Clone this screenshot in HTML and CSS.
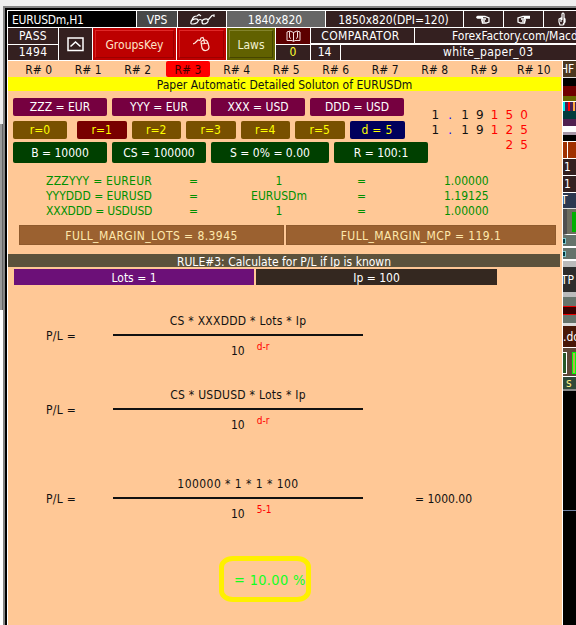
FILE: index.html
```html
<!DOCTYPE html>
<html lang="en">
<head>
    <meta charset="UTF-8">
    <meta name="viewport" content="width=device-width, initial-scale=1.0">
    <title>EURUSDm,H1</title>
    <link rel="stylesheet" href="styles.css">
</head>
<body>
    <div class="top-edge"></div>
    <div class="main">
        <div class="gutter"><i class="g1"></i><i class="g2"></i><i class="g3"></i></div>
        <div class="window">
            <div class="chart">
                <!-- toolbar, first row -->
                <div class="bar">
                    <div class="cell symbol">EURUSDm,H1</div>
                    <div class="cell vps">VPS</div>
                    <div class="cell glasses">
                        <svg width="25" height="12" viewBox="0 0 25 12"><path d="M1 9C1 6 7 5 8 7S6 11 3 11S1 10 1 9ZM12 9C12 6 17 5 18 7S16 11 14 11S12 10 12 9ZM8 8Q10 5 12.500 8M2 7Q3 3 7 3L9 1.500L11 3M18 7L22 2.500L24 2V4" fill="none" stroke="#fff" stroke-width="1.200"/></svg>
                    </div>
                    <div class="cell size">1840x820</div>
                    <div class="cell dpi">1850x820(DPI=120)</div>
                    <div class="cell hand">
                        <svg width="15" height="9" viewBox="0 0 15 9"><path d="M7 3H1.500Q0 2 1.500 1.500H9L13 3V7L10 8H6.500L6 6H9M6 6Q5 4 7 4H10" fill="none" stroke="#fff" stroke-width="1.300"/></svg>
                    </div>
                    <div class="cell hand">
                        <svg class="flip" width="15" height="9" viewBox="0 0 15 9"><path d="M1 1.500H8L13 3V7L10 8H6.500L6 6H9M1 3H7M6 6Q5 4 7 4H10" fill="none" stroke="#fff" stroke-width="1.300"/></svg>
                    </div>
                    <div class="cell up">
                        <svg width="9" height="14" viewBox="0 0 9 14"><path d="M4 8V2Q5 0 6 2V12L5 13H2L1 10V7L3 6V10M6 6L7 7V10L5 12" fill="none" stroke="#fff" stroke-width="1.200"/></svg>
                    </div>
                </div>
                <!-- toolbar, second row -->
                <div class="bar tall">
                    <div class="stack pass">
                        <div class="cell">PASS</div>
                        <div class="cell">1494</div>
                    </div>
                    <div class="cell toggle">
                        <svg width="17" height="15" viewBox="0 0 17 15"><rect x="1" y="1" width="15" height="12.500" fill="none" stroke="#fff" stroke-width="1.500"/><path d="M3.500 9.500L8.500 5L13.500 9.500" fill="none" stroke="#fff" stroke-width="1.600"/></svg>
                    </div>
                    <div class="cell groups"><span>GroupsKey</span></div>
                    <div class="cell mouse">
                        <span><svg width="17" height="16" viewBox="0 0 17 16"><path d="M0 8L2 7L5 4L7 4.500L8 2L10 1.500L11 4M8 6Q9 4 12 4Q14 4 15 7L16 11Q16 14 13 14.500Q10 15 9 12ZM8 8L15 7M11 4.500L11.500 7.500" fill="none" stroke="#ffe8dc" stroke-width="1.200"/></svg></span>
                    </div>
                    <div class="cell laws"><span>Laws</span></div>
                    <div class="stack book">
                        <div class="cell">
                            <svg width="15" height="12" viewBox="0 0 15 12"><path d="M1 10.500V2L4 1L7.500 2.500L11 1L14 2V10.500H9L7.500 11.500L6 10.500ZM7.500 2.500V11M3.500 1.500V7.500L5 8.500M11.500 1.500V7.500L10 8.500" fill="none" stroke="#f4dcdc" stroke-width="1"/></svg>
                        </div>
                        <div class="cell zero">0</div>
                    </div>
                    <div class="stack rest">
                        <div class="line">
                            <div class="cell comparator">COMPARATOR</div>
                            <div class="cell factory">ForexFactory.com/Mac&#8203;d</div>
                        </div>
                        <div class="line">
                            <div class="cell fourteen">14</div>
                            <div class="cell paper-name">white_paper_03</div>
                        </div>
                    </div>
                </div>

                <div class="body">
                    <div class="paper">
                        <div class="rules">
                            <span>R# 0</span><span>R# 1</span><span>R# 2</span><span class="active">R# 3</span><span>R# 4</span><span>R# 5</span><span>R# 6</span><span>R# 7</span><span>R# 8</span><span>R# 9</span><span>R# 10</span>
                        </div>
                        <div class="title"><span>Paper Automatic Detailed Soluton of EURUSDm</span></div>

                        <div class="setup">
                            <div class="chips">
                                <div class="chip-row pairs">
                                    <div>ZZZ = EUR</div><div>YYY = EUR</div><div>XXX = USD</div><div>DDD = USD</div>
                                </div>
                                <div class="chip-row ratios">
                                    <div>r=0</div><div class="on">r=1</div><div>r=2</div><div>r=3</div><div>r=4</div><div>r=5</div><div class="digits">d = 5</div>
                                </div>
                                <div class="chip-row account">
                                    <div>B = 10000</div><div>CS = 100000</div><div>S = 0% = 0.00</div><div>R = 100:1</div>
                                </div>
                            </div>
                            <div class="prices">
                                <b>1</b><b class="dot">.</b><b>1</b><b>9</b><i>1</i><i>5</i><i>0</i>
                                <b>1</b><b class="dot">.</b><b>1</b><b>9</b><i>1</i><i>2</i><i>5</i>
                                <b></b><b></b><b></b><b></b><b></b><i>2</i><i>5</i>
                            </div>
                        </div>

                        <div class="quotes">
                            <span class="wide">ZZZYYY = EUREUR</span><span>=</span><span class="mid">1</span><span>=</span><span>1.00000</span>
                            <span>YYYDDD = EURUSD</span><span>=</span><span class="mid">EURUSDm</span><span>=</span><span>1.19125</span>
                            <span class="tight">XXXDDD = USDUSD</span><span>=</span><span class="mid">1</span><span>=</span><span>1.00000</span>
                        </div>

                        <div class="margins">
                            <div><span>FULL_MARGIN_LOTS = 8.3945</span></div>
                            <div><span>FULL_MARGIN_MCP = 119.1</span></div>
                        </div>
                        <div class="rule-name"><span>RULE#3: Calculate for P/L if Ip is known</span></div>
                        <div class="inputs">
                            <div class="lots">Lots = 1</div>
                            <div class="ip">Ip = 100</div>
                        </div>

                        <div class="formula first">
                            <div class="lhs">P/L =</div>
                            <div class="fraction">
                                <div class="num">CS * XXXDDD * Lots * Ip</div>
                                <div class="den">10<sup>d-r</sup></div>
                            </div>
                        </div>
                        <div class="formula second">
                            <div class="lhs">P/L =</div>
                            <div class="fraction">
                                <div class="num">CS * USDUSD * Lots * Ip</div>
                                <div class="den">10<sup>d-r</sup></div>
                            </div>
                        </div>
                        <div class="formula third">
                            <div class="lhs">P/L =</div>
                            <div class="fraction">
                                <div class="num">100000 * 1 * 1 * 100</div>
                                <div class="den">10<sup>5-1</sup></div>
                            </div>
                            <div class="result">= 1000.00</div>
                        </div>
                        <div class="percent">= 10.00 %</div>
                    </div>

                    <!-- panels cut off by the paper -->
                    <div class="side">
                        <div class="s-hf">HF</div>
                        <div class="s-black"></div>
                        <div class="s-red"></div>
                        <div class="s-olive"></div>
                        <div class="s-ticks"><i></i><i></i><i></i></div>
                        <div class="s-teal"></div>
                        <div class="s-plum"></div>
                        <div class="s-white"></div>
                        <div class="s-gap"></div>
                        <div class="s-orange"></div>
                        <div class="s-one">1</div>
                        <div class="s-one">1</div>
                        <div class="s-t">T</div>
                        <div class="s-green"><i></i></div>
                        <div class="s-gray"><i></i></div>
                        <div class="s-gray"><i></i></div>
                        <div class="s-tp">TP</div>
                        <div class="s-stripe"></div>
                        <div class="s-do">.do</div>
                        <div class="s-lime"><i></i><i></i></div>
                        <div class="s-s">s</div>
                        <div class="s-rest"></div>
                    </div>
                </div>
            </div>
        </div>
    </div>
</body>
</html>
```
FILE: styles.css
```css
* {
    margin: 0;
    padding: 0;
    box-sizing: border-box;
}

body {
    width: 576px;
    height: 625px;
    overflow: hidden;
    background: #efefef;
    font: 12px/15px "DejaVu Sans Condensed", "DejaVu Sans", Tahoma, sans-serif;
    font-stretch: condensed;
    color: #111;
    white-space: nowrap;
}

i, b {
    font-style: normal;
    font-weight: normal;
}

.top-edge {
    height: 6px;
    background: #efefef;
}

.main {
    display: flex;
    height: 619px;
}

.gutter {
    flex: 0 0 3px;
    display: flex;
    flex-direction: column;
}

.gutter .g1 {
    height: 118px;
    background: #efefef;
}

.gutter .g2 {
    height: 186px;
    background: #999;
    border-right: 1px solid #666;
}

.gutter .g3 {
    flex: 1;
    background: #fff;
}

.window {
    flex: 1;
    overflow: hidden;
    border-left: 2px solid #858585;
    border-top: 2px solid #858585;
}

.chart {
    width: 571px;
    height: 617px;
    border-left: 2px solid #000;
    border-top: 2px solid #000;
    box-shadow: inset 1px 1px #fff;
    padding: 1px 0 0 1px;
}

/* toolbar */
.bar {
    display: flex;
    gap: 1px;
    height: 17px;
    padding-bottom: 1px;
    background: #fff;
    color: #fff;
    overflow: hidden;
}

.bar.tall {
    height: 33px;
}

.cell {
    flex: none;
    display: flex;
    justify-content: center;
    align-items: center;
    background: #342020;
    overflow: hidden;
}

.symbol {
    width: 128px;
    justify-content: flex-start;
    padding: 3px 0 0 4px;
    background: #000;
    letter-spacing: -0.25px;
}

.vps {
    width: 40px;
    padding-top: 2px;
    background: #484848;
}

.glasses { width: 48px; }

.size {
    width: 98px;
    padding: 2px 2px 0 0;
    background: #666;
}

.dpi {
    width: 137px;
    padding: 2px 2px 0 0;
}

.hand { width: 39px; }

.flip { transform: scaleX(-1); }

.up {
    width: 40px;
    padding-right: 3px;
}

.stack {
    flex: none;
    display: flex;
    flex-direction: column;
    gap: 1px;
}

.stack > .cell,
.line .cell {
    height: 15px;
    flex: 1;
}

.stack .cell {
    padding-top: 1px;
}

.pass { width: 50px; }

.pass .cell { letter-spacing: 0.3px; }

.toggle { width: 33px; }

.groups, .mouse, .laws {
    padding: 2px;
}

.groups span, .mouse span, .laws span {
    width: 100%;
    height: 100%;
    display: flex;
    align-items: center;
    justify-content: center;
    padding-top: 2px;
}

.groups, .mouse {
    width: 83px;
    background: #bd0000;
    color: #ffe4c8;
}

.groups span, .mouse span {
    border: 1px solid #d33;
    border-color: #e02828 #9d0000 #9d0000 #d82020;
}

.mouse { width: 49px; }

.mouse span { padding: 0; }

.laws {
    width: 48px;
    background: #616100;
    color: #f2f2d0;
}

.laws span {
    border: 1px solid;
    border-color: #83832c #454500 #454500 #83832c;
}

.book { width: 34px; }

.book .cell:first-child { background: #5c0000; }

.book .zero { color: #ff3; }

.rest { width: 270px; }

.line {
    display: flex;
    gap: 1px;
    height: 15px;
    flex: 1;
}

.line .comparator { flex: 0 0 103px; padding-right: 4px; letter-spacing: 0.4px; }

.line .factory {
    justify-content: flex-start;
    padding-left: 37px;
}

.line .fourteen { flex: 0 0 29px; padding-right: 2px; }

.line .paper-name {
    justify-content: flex-start;
    padding-left: 102px;
    letter-spacing: 0.35px;
}

/* paper */
.body {
    display: flex;
    height: 564px;
}

.paper {
    flex: 0 0 555px;
    background: #ffc896;
    border-right: 1px solid #fff;
}

.rules {
    display: flex;
    height: 16px;
    padding-left: 6px;
}

.rules span {
    width: 49.5px;
    text-align: center;
    line-height: 18px;
}

.rules .active {
    background: #f00;
    width: 44px;
    margin: 0 2px 0 3.5px;
    color: #400000;
    border-radius: 2px;
}

.title {
    height: 14px;
    margin-right: 1px;
    background: #ff0;
    text-align: center;
    line-height: 16px;
}

.setup {
    display: flex;
    height: 72px;
    padding: 7px 0 0 5px;
}

.chips { width: 416px; }

.chip-row {
    display: flex;
    gap: 5px;
    height: 18px;
    margin-bottom: 5px;
}

.chip-row div {
    width: 94px;
    display: flex;
    align-items: center;
    justify-content: center;
    border-radius: 2px;
    color: #fff;
}

.account div { padding-top: 2px; }

.pairs div { background: #760040; }

.ratios { margin-bottom: 3px; }

.ratios div {
    width: 49.5px;
    padding-top: 1px;
    background: #785000;
    color: #ff0;
}

.ratios div:first-child {
    width: 54px;
    margin-right: 5px;
}

.ratios .on { background: #780000; }

.ratios .digits {
    width: 55px;
    background: #00005c;
    letter-spacing: 0.3px;
}

.account { height: 21px; }

.account div { background: #004000; }

.account div:nth-child(3) { width: 118px; }

.prices {
    display: grid;
    grid-template-columns: repeat(7, 14.8px);
    grid-auto-rows: 15px;
    height: 45px;
    margin: 10px 0 0 -7px;
    padding-left: 6px;
    text-align: center;
    font-family: "DejaVu Sans", sans-serif;
    font-stretch: normal;
}

.prices i { color: #f00; }

.prices .dot { color: #00f; }

.quotes {
    display: grid;
    grid-template-columns: 143px 52px 76px 87px 60px;
    grid-auto-rows: 15px;
    margin: 11px 0 0 38px;
    color: #009000;
}

.quotes .wide { letter-spacing: 0.25px; }

.quotes .tight { letter-spacing: -0.2px; }

.quotes .mid { text-align: center; }

.quotes span:nth-child(5n+4) { padding-left: 40px; }

.quotes span:nth-child(5n) { padding-left: 40px; }

.margins {
    display: flex;
    gap: 2px;
    height: 20px;
    margin: 6px 5px 9px 11px;
    color: #ffe8ac;
    letter-spacing: 0.42px;
}

.margins div {
    width: 265px;
    background: #9b6130;
    border: 1px solid #8f5a2c;
    text-align: center;
    line-height: 20px;
}

.margins div:last-child { width: 270px; }

.rule-name {
    height: 13px;
    margin-right: 2px;
    overflow: hidden;
    background: #5c523c;
    color: #fff;
    text-align: center;
    line-height: 16px;
}

.inputs {
    display: flex;
    gap: 2px;
    height: 16px;
    margin: 2px 0 0 6px;
    color: #fff;
    text-align: center;
    line-height: 18px;
}

.inputs div { width: 240px; }

.inputs .ip {
    width: 241px;
    background: #342820;
}

.lots { background: #6c1078; }

.formula {
    display: flex;
    height: 46px;
    padding-left: 37px;
}

.first { margin-top: 28px; }

.second { margin-top: 28px; }

.third { margin-top: 43px; }

.lhs {
    width: 68px;
    padding: 16px 0 0 1px;
    letter-spacing: 0.3px;
}

.fraction { width: 250px; }

.num {
    height: 23px;
    padding-top: 1px;
    border-bottom: 2px solid #111;
    text-align: center;
    letter-spacing: 0.26px;
}

.third .num { letter-spacing: 0.45px; }

.den {
    padding: 6px 0 0 118px;
}

.den sup {
    margin-left: 12px;
    color: #f00;
    font-size: 10px;
    line-height: 10px;
    vertical-align: 5px;
}

.result {
    padding: 16px 0 0 52px;
}

.percent {
    width: 92px;
    height: 46px;
    margin: 34px 0 0 211px;
    padding-left: 10px;
    border: 5px solid #fff000;
    border-radius: 14px / 11px;
    color: #1f2;
    font-size: 14.5px;
    line-height: 39px;
    letter-spacing: 0.3px;
}

/* right strip */
.side {
    flex: 1;
    display: flex;
    flex-direction: column;
    overflow: hidden;
    background: #000;
    color: #fff;
}

.side > div {
    flex: none;
    overflow: hidden;
}

.s-hf {
    height: 17px;
    background: #4c3820;
    border-bottom: 1px solid #ddd;
    text-indent: -3px;
    line-height: 17px;
}

.s-black { height: 8px; }

.s-red { height: 10px; background: #700000; }

.s-olive { height: 6px; background: #686800; border-bottom: 1px solid #fff; }

.side > .s-ticks {
    display: flex;
    gap: 3px;
    height: 9px;
    background: #482050;
}

.s-ticks i { width: 2px; background: #0ee; }

.s-ticks i:nth-child(2) { background: #f00; }

.s-ticks i:nth-child(3) { background: #fa4; }

.s-teal { height: 8px; background: #003c3c; }

.s-plum { height: 7px; background: #502050; }

.s-white { height: 9px; background: #fff; border-bottom: 3px solid #a898a8; }

.s-gap { height: 6px; }

.s-orange {
    height: 18px;
    background: linear-gradient(90deg, #a03000 4px, #fff 4px, #fff 5px, #a03000 5px);
    border-top: 1px solid #fff;
    border-bottom: 1px solid #fff;
}

.s-one {
    height: 17px;
    padding-left: 1px;
    background: #342020;
    border-bottom: 1px solid #fff;
    line-height: 17px;
}

.s-t {
    height: 16px;
    background: #2c3850;
    border-bottom: 1px solid #ddd;
    text-indent: -2px;
}

.s-green {
    height: 26px;
    padding: 3px 0 2px;
    background: #6e6e60;
    border-left: 4px solid #505050;
    border-bottom: 1px solid #fff;
}

.s-green i {
    display: block;
    height: 20px;
    margin-left: 5px;
    border: 2px solid #00b000;
    background: #006000;
}

.s-gray {
    height: 13px;
    padding-top: 3px;
    background: #66736b;
    border-bottom: 2px solid #fff;
}

.s-gray i {
    display: block;
    width: 3px;
    height: 6px;
    border: 1px solid #7cc8cc;
    border-left: 0;
    background: #003840;
}

.s-tp {
    height: 36px;
    background: #2d2d2d;
    border-top: 6px solid #bbb;
    border-bottom: 5px solid #bbb;
    text-indent: -2px;
    line-height: 26px;
}

.s-stripe {
    height: 26px;
    border-top: 9px solid #66736b;
    border-bottom: 8px solid #66736b;
    background: #380000;
    box-shadow: inset 0 1px #e00, inset 0 -1px #e00;
}

.s-do {
    height: 25px;
    background: #481808;
    border-top: 3px solid #ddd;
    border-bottom: 1px solid #fff;
    line-height: 23px;
}

.side > .s-lime {
    display: flex;
    gap: 5px;
    height: 29px;
    padding: 4px 0 2px;
    background: #604838;
    border-bottom: 1px solid #fff;
}

.s-lime i { width: 4px; border: 1px solid #fff; border-left: 0; background: #285828; }

.s-lime i:last-child { border: 1px solid #0f0; background: #b4b050; flex: 1; }

.s-s {
    height: 14px;
    padding-left: 3px;
    background: #2f4838;
    border-bottom: 2px solid #888;
    color: #ffec80;
    line-height: 13px;
}

.s-rest {
    height: 120px;
    border-bottom: 1px solid #7080a0;
}
```
